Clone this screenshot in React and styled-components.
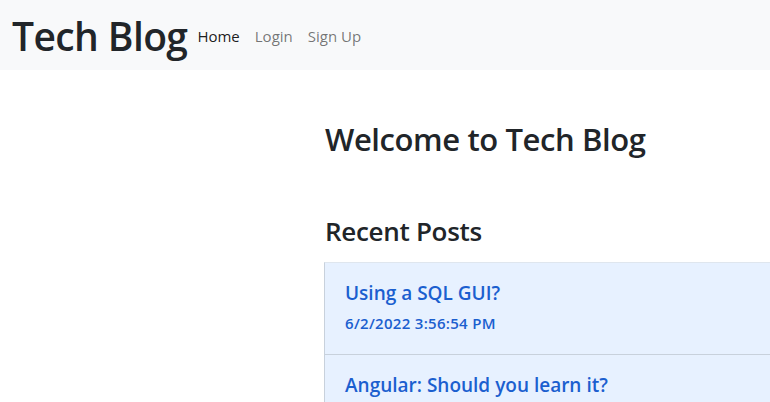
import styled, { createGlobalStyle } from 'styled-components';

const Global = createGlobalStyle`
  * { box-sizing: border-box; }
  body {
    margin: 0;
    font-family: "Open Sans", "Noto Sans", sans-serif;
    color: #212529;
    background: #fff;
  }
  h1, h2, h3, h4, p { margin: 0; }
`

const Nav = styled.nav`
  height: 70px;
  background-color: #f8f9fa;
  display: flex;
  align-items: center;
  padding: 0 12px;
`

const Brand = styled.a`
  font-size: 39px;
  font-weight: 600;
  color: #212529;
  text-decoration: none;
  margin-right: 10px;
  letter-spacing: -0.6px;
`

const NavLinks = styled.ul`
  list-style: none;
  display: flex;
  gap: 15px;
  margin: 0;
  padding: 2px 0 0;
  li a {
    font-size: 15px;
    text-decoration: none;
    color: rgba(0,0,0,.55);
  }
  li a.active {
    color: rgba(0,0,0,.9);
  }
`

const Main = styled.main`
  display: grid;
  grid-template-columns: 324px 1fr;
`

const Content = styled.section`
  padding-top: 51px;
  h2 {
    font-size: 31px;
    font-weight: 600;
    line-height: 1.2;
    padding-left: 1px;
    letter-spacing: -0.4px;
  }
  h3 {
    font-size: 26px;
    font-weight: 600;
    line-height: 1.2;
    margin-top: 58px;
    margin-bottom: 15px;
    padding-left: 1px;
    letter-spacing: -0.3px;
  }
`

const PostList = styled.ul`
  list-style: none;
  margin: 0;
  padding: 0;
  border-left: 1px solid #c8d1dc;
  border-top: 1px solid #dfe6ee;
`

const PostItem = styled.li`
  background-color: #e7f1ff;
  color: #1b5fcf;
  padding: 19px 20px 21px;
  border-bottom: 1px solid #c8d1dc;
  h4 {
    font-size: 19px;
    font-weight: 600;
    line-height: 23px;
  }
  p {
    font-size: 15px;
    font-weight: 600;
    line-height: 20px;
    margin-top: 8px;
    letter-spacing: 0.3px;
  }
`

const posts = [
  { title: 'Using a SQL GUI?', date: '6/2/2022 3:56:54 PM' },
  { title: 'Angular: Should you learn it?', date: '6/2/2022 3:56:54 PM' },
]

export default function App() {
  return (
    <>
      <Global />
      <Nav>
        <Brand href="#">Tech Blog</Brand>
        <NavLinks>
          <li><a className="active" href="#">Home</a></li>
          <li><a href="#">Login</a></li>
          <li><a href="#">Sign Up</a></li>
        </NavLinks>
      </Nav>
      <Main>
        <div />
        <Content>
          <h2>Welcome to Tech Blog</h2>
          <h3>Recent Posts</h3>
          <PostList>
            {posts.map((p) => (
              <PostItem key={p.title}>
                <h4>{p.title}</h4>
                <p>{p.date}</p>
              </PostItem>
            ))}
          </PostList>
        </Content>
      </Main>
    </>
  )
}
